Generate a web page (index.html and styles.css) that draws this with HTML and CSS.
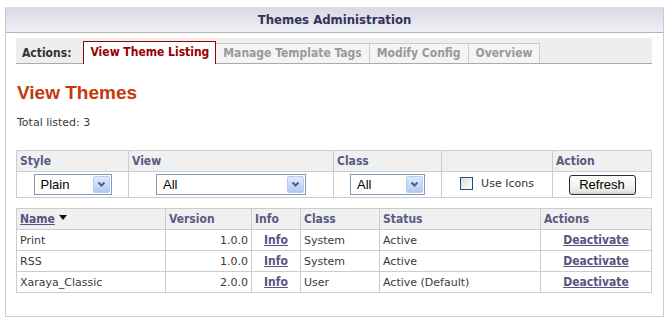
FILE: index.html
```html
<!DOCTYPE html>
<html lang="en">
<head>
    <meta charset="UTF-8">
    <title>Themes Administration</title>
    <link rel="stylesheet" href="styles.css">
</head>
<body>
    <div class="panel">
        <div class="panel-head">Themes Administration</div>
        <div class="panel-body">
            <!-- Action tabs -->
            <div class="tabs">
                <span class="tabs-label">Actions:</span>
                <a href="#" class="tab active">View Theme Listing</a>
                <a href="#" class="tab">Manage Template Tags</a>
                <a href="#" class="tab">Modify Config</a>
                <a href="#" class="tab">Overview</a>
            </div>

            <h2 class="page-title">View Themes</h2>
            <p class="total">Total listed: 3</p>

            <!-- Filters -->
            <table class="grid filters">
                <tr>
                    <th class="c-style">Style</th>
                    <th class="c-view">View</th>
                    <th class="c-class">Class</th>
                    <th class="c-icons"></th>
                    <th class="c-action">Action</th>
                </tr>
                <tr>
                    <td class="center">
                        <span class="select w-plain">Plain<span class="arrow"><svg width="9" height="7" viewBox="0 0 9 7"><path d="M1.5 1.5 L4.5 4.5 L7.5 1.5" fill="none" stroke="#4d6185" stroke-width="2"/></svg></span></span>
                    </td>
                    <td class="center">
                        <span class="select w-view">All<span class="arrow"><svg width="9" height="7" viewBox="0 0 9 7"><path d="M1.5 1.5 L4.5 4.5 L7.5 1.5" fill="none" stroke="#4d6185" stroke-width="2"/></svg></span></span>
                    </td>
                    <td class="center">
                        <span class="select w-class">All<span class="arrow"><svg width="9" height="7" viewBox="0 0 9 7"><path d="M1.5 1.5 L4.5 4.5 L7.5 1.5" fill="none" stroke="#4d6185" stroke-width="2"/></svg></span></span>
                    </td>
                    <td class="center">
                        <label class="check-row"><span class="check"></span>Use Icons</label>
                    </td>
                    <td class="center">
                        <button type="button" class="btn">Refresh</button>
                    </td>
                </tr>
            </table>

            <!-- Theme list -->
            <table class="grid themes">
                <tr>
                    <th class="c-name"><a href="#">Name</a> <svg class="sort" width="8" height="5" viewBox="0 0 8 5"><path d="M0 0 H8 L4 5 Z" fill="#111"/></svg></th>
                    <th class="c-version">Version</th>
                    <th class="c-info">Info</th>
                    <th class="c-cls">Class</th>
                    <th class="c-status">Status</th>
                    <th class="c-actions">Actions</th>
                </tr>
                <tr>
                    <td>Print</td>
                    <td class="right">1.0.0</td>
                    <td class="center"><a href="#">Info</a></td>
                    <td>System</td>
                    <td>Active</td>
                    <td class="center"><a href="#">Deactivate</a></td>
                </tr>
                <tr>
                    <td>RSS</td>
                    <td class="right">1.0.0</td>
                    <td class="center"><a href="#">Info</a></td>
                    <td>System</td>
                    <td>Active</td>
                    <td class="center"><a href="#">Deactivate</a></td>
                </tr>
                <tr>
                    <td>Xaraya_Classic</td>
                    <td class="right">2.0.0</td>
                    <td class="center"><a href="#">Info</a></td>
                    <td>User</td>
                    <td>Active (Default)</td>
                    <td class="center"><a href="#">Deactivate</a></td>
                </tr>
            </table>
        </div>
    </div>
</body>
</html>
```

FILE: styles.css
```css
body {
    margin: 0;
    padding: 7px 0 0 5px;
    background: #fff;
    font-family: "DejaVu Sans", Verdana, sans-serif;
    font-size: 11px;
    color: #3a3a3a;
}

.panel {
    width: 657px;
    border: 1px solid #ccc;
    border-top-color: #ddd;
}

.panel-head {
    height: 24px;
    line-height: 24px;
    text-align: center;
    background: linear-gradient(#d9d9e7, #efeff4);
    border-bottom: 1px solid #b4b4b4;
    font-family: "DejaVu Sans Condensed", "DejaVu Sans", sans-serif;
    font-stretch: condensed;
    font-weight: bold;
    font-size: 13px;
    color: #33335a;
}

.panel-body {
    padding: 5px 11px 23px 10px;
}

/* tabs */
.tabs {
    display: flex;
    align-items: flex-end;
    height: 25px;
    background: #eee;
    border-bottom: 1px solid #aaa;
    font-family: "DejaVu Sans Condensed", "DejaVu Sans", sans-serif;
    font-stretch: condensed;
    font-weight: bold;
    font-size: 12px;
}

.tabs-label {
    padding: 0 12px 3px 6px;
    color: #333;
}

.tab {
    display: block;
    padding: 2px 7px 3px;
    border: 1px solid #ccc;
    border-bottom: none;
    border-left: none;
    background: #f4f4f4;
    color: #999;
    text-decoration: none;
}

.tab.active {
    background: #fff;
    border: 1px solid #900;
    border-bottom: none;
    color: #900;
    padding: 3px 6px 5px;
    margin-bottom: -1px;
}

.page-title {
    margin: 17px 0 0 1px;
    font-family: "Liberation Sans", Arial, sans-serif;
    font-size: 19px;
    font-weight: bold;
    color: #c3390c;
    line-height: 24px;
}

.total {
    margin: 11px 0 0 1px;
    line-height: 14px;
}

/* tables */
.grid {
    width: 636px;
    border-collapse: collapse;
    margin-top: 20px;
}

.grid th,
.grid td {
    border: 1px solid #ccc;
    padding: 0 3px;
    text-align: left;
    white-space: nowrap;
}

.grid th {
    background: #f0f0f0;
    height: 20px;
    font-family: "DejaVu Sans Condensed", "DejaVu Sans", sans-serif;
    font-stretch: condensed;
    font-weight: bold;
    font-size: 12px;
    color: #5a5a82;
}

.grid td {
    height: 20px;
}

.grid a {
    color: #55557f;
    font-family: "DejaVu Sans Condensed", "DejaVu Sans", sans-serif;
    font-stretch: condensed;
    font-weight: bold;
    font-size: 12px;
}

.grid .center {
    text-align: center;
}

.grid .right {
    text-align: right;
}

.filters td {
    height: 25px;
}

.themes {
    margin-top: 10px;
}

.c-style { width: 105px; }
.c-view { width: 198px; }
.c-class { width: 101px; }
.c-icons { width: 104px; }

.c-name { width: 142px; }
.c-version { width: 79px; }
.c-info { width: 42px; }
.c-cls { width: 72px; }
.c-status { width: 154px; }

.sort {
    vertical-align: 3px;
}

/* fake form controls */
.select {
    display: inline-flex;
    align-items: center;
    justify-content: space-between;
    box-sizing: border-box;
    height: 21px;
    padding-left: 6px;
    border: 1px solid #7f9db9;
    background: #fff;
    font-family: "Liberation Sans", Arial, sans-serif;
    font-size: 13px;
    color: #000;
    vertical-align: middle;
    text-align: left;
}

.select .arrow {
    display: flex;
    align-items: center;
    justify-content: center;
    width: 15px;
    height: 15px;
    margin-right: 1px;
    border: 1px solid #b8cdf3;
    border-radius: 2px;
    background: linear-gradient(#e1eafc, #b4c9f3);
}

.w-plain { width: 78px; }
.w-view { width: 150px; }
.w-class { width: 75px; }

.check-row {
    display: inline-flex;
    align-items: center;
    gap: 8px;
    color: #333;
}

.check {
    width: 11px;
    height: 11px;
    border: 1px solid #1c5180;
    background: linear-gradient(135deg, #dcdcd7, #fff);
}

.btn {
    width: 67px;
    height: 20px;
    padding: 0;
    border: 1px solid #1f2f3f;
    border-radius: 3px;
    background: linear-gradient(#fff, #ecebe6 80%, #d6d0c5);
    font-family: "Liberation Sans", Arial, sans-serif;
    font-size: 13px;
    color: #000;
    vertical-align: middle;
}
```
